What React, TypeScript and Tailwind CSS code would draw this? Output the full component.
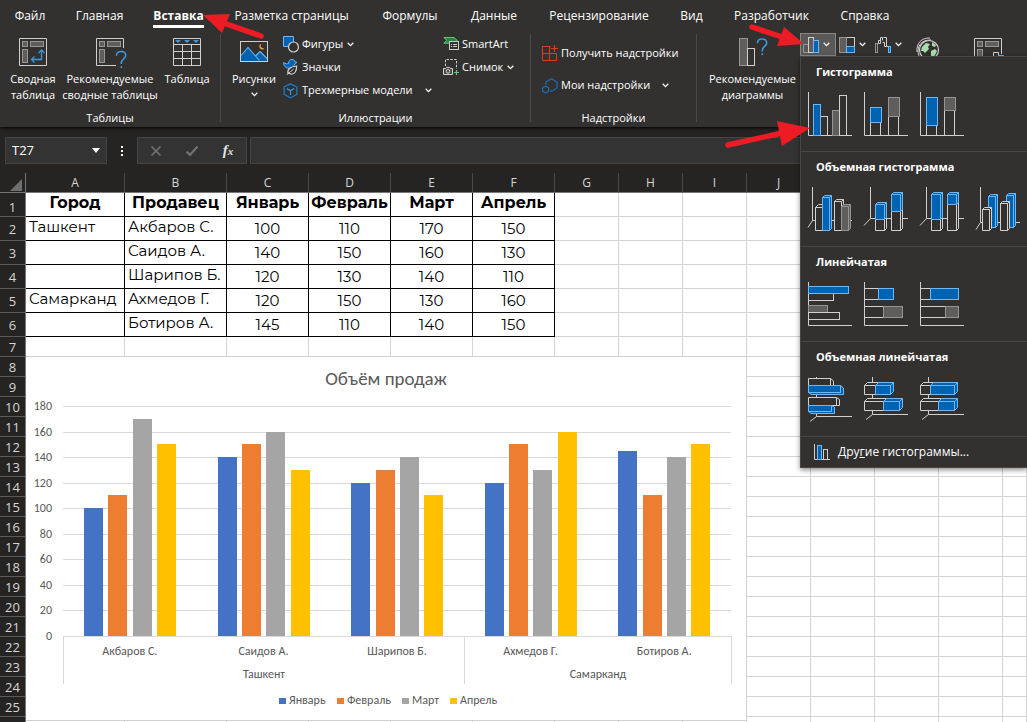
import type { ReactNode } from "react";

const BLUE = "#0063b1";
const BLUE_EDGE = "#6cb8f6";
const SKY = "#3a96dd";
const LIGHT = "#d2d0ce";
const GRAY = "#605e5c";
const GRAY_EDGE = "#979593";
const GREEN = "#5fc77a";
const PANEL = "#323130";

type Tone = "blue" | "gray" | "white";
const fills: Record<Tone, string> = { blue: BLUE, gray: GRAY, white: PANEL };
const edges: Record<Tone, string> = { blue: BLUE_EDGE, gray: GRAY_EDGE, white: LIGHT };

function Icon({ w, h, children }: { w: number; h: number; children: ReactNode }) {
  return (
    <svg width={w} height={h} viewBox={`0 0 ${w} ${h}`} fill="none" aria-hidden="true" className="shrink-0 overflow-visible">
      {children}
    </svg>
  );
}

function Bar({ x, y, w, h, t }: { x: number; y: number; w: number; h: number; t: Tone }) {
  return <rect x={x} y={y} width={w} height={h} fill={fills[t]} stroke={edges[t]} />;
}

function Box({ x, y, w, h, t, d = 3 }: { x: number; y: number; w: number; h: number; t: Tone; d?: number }) {
  return (
    <g fill={fills[t]} stroke={edges[t]} strokeLinejoin="round">
      <path d={`M${x + w} ${y}l${d} ${-d}v${h}l${-d} ${d}z`} />
      <path d={`M${x} ${y}l${d} ${-d}h${w}l${-d} ${d}z`} />
      <rect x={x} y={y} width={w} height={h} />
    </g>
  );
}

function Chevron() {
  return (
    <svg width="7" height="5" viewBox="0 0 7 5" fill="none" stroke="#fff" strokeWidth="1.3" aria-hidden="true" className="shrink-0">
      <path d="M0.7 0.8L3.5 3.6L6.3 0.8" />
    </svg>
  );
}

const questionMark = "M0 4.2C0 1.6 1.8 0 4.6 0S9.2 1.7 9.2 4.1C9.2 7.2 4.8 7.6 4.8 11.4V12.6";

function PivotIcon({ suggested = false }: { suggested?: boolean }) {
  return (
    <Icon w={28} h={28}>
      <path d={suggested ? "M20 27.5H0.5V0.5H27.5V10" : "M0.5 0.5H27.5V27.5H0.5Z"} stroke={LIGHT} />
      <g fill={GRAY} stroke={GRAY_EDGE}>
        <rect x="3.5" y="3.5" width="5" height="5" />
        <rect x="11.5" y="3.5" width="13" height="5" />
        <rect x="3.5" y="11.5" width="5" height="13" />
      </g>
      {suggested ? (
        <g stroke={SKY} strokeWidth="1.6">
          <path d={questionMark} transform="translate(20.5 13.5)" />
          <path d="M25.3 28.2V30" />
        </g>
      ) : (
        <path d="M22.5 12V21.5H12.5M19.5 15L22.5 12L25.5 15M15.5 18.5L12.5 21.5L15.5 24.5" stroke={SKY} strokeWidth="1.3" />
      )}
    </Icon>
  );
}

function PivotChartIcon() {
  return (
    <Icon w={30} h={28}>
      <path d="M27.5 16V0.5H0.5V27.5H19" stroke={LIGHT} />
      <g fill={GRAY} stroke={GRAY_EDGE}>
        <rect x="3.5" y="3.5" width="5" height="5" />
        <rect x="11.5" y="3.5" width="13" height="5" />
        <rect x="3.5" y="11.5" width="5" height="13" />
      </g>
      <path d="M19.5 27.5V14.5H24.5V27.5" stroke={LIGHT} />
      <path d="M24.5 17.5H29.5V27.5H24.5Z" fill={BLUE} stroke={BLUE_EDGE} />
    </Icon>
  );
}

function TableIcon() {
  return (
    <Icon w={28} h={28}>
      <path d="M0.5 0.5H27.5V27.5H0.5Z M0.5 6.5H27.5M0.5 13.5H27.5M0.5 20.5H27.5M9.5 6.5V27.5M18.5 6.5V27.5" stroke={LIGHT} />
      <path d="M2 2H8L5 5ZM11 2H17L14 5ZM20 2H26L23 5Z" fill={SKY} />
    </Icon>
  );
}

function PictureIcon() {
  return (
    <Icon w={28} h={28}>
      <rect x="0.5" y="3.5" width="27" height="20" stroke={LIGHT} />
      <path d="M1 18L8 9.5L19.5 23H1Z" fill={BLUE} />
      <path d="M15.5 18L20 13.5L27 20.5V23H19.5Z" fill={BLUE} />
      <path d="M1 17.5L8 9.5L19.5 22.5M15.5 18L20 13.5L27 20.5" stroke={BLUE_EDGE} strokeWidth="1.1" />
      <path d="M21 6C19.6 7.6 20.4 10.6 24 10.6C22 12 19.4 10.6 19.6 8.4C19.7 7.2 20.2 6.4 21 6Z" fill="#f2a33c" stroke="#f2a33c" strokeWidth="0.5" />
    </Icon>
  );
}

function ShapesIcon() {
  return (
    <Icon w={16} h={16}>
      <path d="M0.5 -0.5H10.5V9.5H0.5Z" fill={BLUE} stroke={BLUE_EDGE} />
      <circle cx="10.5" cy="10" r="5" fill={PANEL} stroke={LIGHT} strokeWidth="1.2" />
    </Icon>
  );
}

function PictogramIcon() {
  return (
    <Icon w={16} h={16}>
      <path d="M0.6 2.5C2.4 4 4.4 4 5.8 3.4C5.4 1 7 -0.6 8.8 -0.6C10.6 -0.6 11.6 0.4 11.8 1.8L14 2.4L11.8 3.8C11.4 6.6 9.4 8.2 6 8.2C2.6 8.2 0.4 5.8 0.6 2.5Z" fill={BLUE} stroke={BLUE_EDGE} />
      <path d="M5 13.5C4 9.5 7 6.6 13.6 6C13.8 11.6 11.4 14.4 8 14C6.6 13.8 5.6 13.2 5 12.5Z" fill={PANEL} stroke={LIGHT} strokeWidth="1.2" />
      <path d="M4 14.8C6 12 8.6 11.4 10.6 9" stroke={LIGHT} />
    </Icon>
  );
}

function CubeIcon() {
  return (
    <Icon w={16} h={16}>
      <path d="M7.5 0.8L13.9 4V11.4L7.5 14.8L1.1 11.4V4Z" stroke="#1a78c8" strokeWidth="1.3" />
      <path d="M3.8 5.6L7.5 7.6L11.2 5.6M7.5 7.6V12" stroke={SKY} strokeWidth="1.2" />
    </Icon>
  );
}

function SmartArtIcon() {
  return (
    <Icon w={16} h={16}>
      <path d="M0.8 0.5H11L14.4 3.6L11.5 6.2H0.8L4 3.4Z" fill="#27863f" stroke={GREEN} />
      <rect x="6.5" y="4.5" width="9" height="8" fill={PANEL} stroke={LIGHT} />
      <path d="M8 7.5H9M10 7.5H14M8 9.5H9M10 9.5H14" stroke={LIGHT} />
    </Icon>
  );
}

function SnapshotIcon() {
  return (
    <Icon w={16} h={16}>
      <path d="M2.5 6V-0.5H13.5V9" stroke={LIGHT} strokeDasharray="2.4 1.4" />
      <path d="M0.5 8.5H2.6L3.4 7.4H6.6L7.4 8.5H9.5V14.5H0.5Z" fill="#4a4846" stroke={LIGHT} />
      <circle cx="5" cy="11.3" r="1.8" stroke={LIGHT} />
      <path d="M13.5 10V15M11 12.5H16" stroke={GREEN} strokeWidth="1.2" />
    </Icon>
  );
}

function GetAddInsIcon() {
  return (
    <Icon w={16} h={16}>
      <path d="M8.5 0.5H0.5V14.5H14.5V7.5M0.5 7.5H14.5M7.5 0.5V14.5M12.5 -1V6M9 2.5H16" stroke="#e03c0c" />
    </Icon>
  );
}

function MyAddInsIcon() {
  return (
    <Icon w={16} h={16}>
      <path d="M4 7V4L9.5 0.8L15 4V10L9.5 13.4L8 12.6" stroke="#1a6fb8" strokeWidth="1.2" />
      <path d="M3.6 8.2L6.6 9.8V13.2L3.6 15L0.6 13.2V9.8Z" stroke="#1a6fb8" strokeWidth="1.2" />
    </Icon>
  );
}

function RecommendedChartsIcon() {
  return (
    <Icon w={28} h={28}>
      <rect x="0.5" y="0.5" width="8" height="27" fill={GRAY} stroke={GRAY_EDGE} />
      <rect x="8.5" y="10.5" width="7" height="17" stroke={LIGHT} />
      <path d={questionMark} transform="translate(18.5 1)" stroke={SKY} strokeWidth="1.6" />
      <path d="M23.3 15.2V17.2" stroke={SKY} strokeWidth="1.6" />
    </Icon>
  );
}

function ColumnMiniIcon() {
  return (
    <Icon w={16} h={16}>
      <path d="M5.5 15.5H0.5V7.5H5.5" stroke={GRAY_EDGE} />
      <rect x="5.5" y="0.5" width="5" height="15" fill={GRAY} stroke={LIGHT} />
      <rect x="10.5" y="3.5" width="5" height="12" fill={BLUE} stroke={BLUE_EDGE} />
    </Icon>
  );
}

function TreemapMiniIcon() {
  return (
    <Icon w={16} h={16}>
      <rect x="7.5" y="0.5" width="8" height="9" stroke={LIGHT} />
      <rect x="0.5" y="0.5" width="7" height="15" fill={GRAY} stroke={GRAY_EDGE} />
      <rect x="7.5" y="9.5" width="8" height="6" fill={BLUE} stroke={BLUE_EDGE} />
    </Icon>
  );
}

function WaterfallMiniIcon() {
  return (
    <Icon w={16} h={16}>
      <rect x="0.5" y="6.5" width="2" height="9" stroke={GRAY_EDGE} />
      <path d="M3.5 6.5V3.5H5.5V0.5H7.5V3.5M3.5 6.5H5.5V3.5M8.5 0.5H11.5V9.5H9.5V5.5H7.5" stroke={LIGHT} />
      <rect x="13.5" y="9.5" width="2" height="6" fill={BLUE} stroke={BLUE_EDGE} />
      <path d="M11.5 9.5H13.5" stroke={LIGHT} />
    </Icon>
  );
}

function GlobeIcon() {
  return (
    <Icon w={24} h={24}>
      <circle cx="13" cy="13" r="9.5" fill={PANEL} stroke={LIGHT} strokeWidth="1.2" />
      <path d="M6 10L10 6L14 7L12 10L13 12L9 16L7 14L5 14Z" fill="#a6dcae" />
      <path d="M16 5L20 8L19 10L16 9ZM15 14L19 12L21 14L18 20L15 19Z" fill="#a6dcae" />
      <path d="M1 15C0 6 6 0.5 14 1M3 19C-0.5 9 6 2.5 15 3" stroke={LIGHT} />
    </Icon>
  );
}

const tabs = ["Файл", "Главная", "Вставка", "Разметка страницы", "Формулы", "Данные", "Рецензирование", "Вид", "Разработчик", "Справка"];

function BigButton({ icon, lines, chevron = false }: { icon: ReactNode; lines: string[]; chevron?: boolean }) {
  return (
    <button type="button" className="flex min-w-0 flex-col items-center pt-[7px] text-white">
      {icon}
      <span className="mt-[5px] flex flex-col items-center whitespace-nowrap leading-4">
        {lines.map((line) => (
          <span key={line}>{line}</span>
        ))}
      </span>
      {chevron && (
        <span className="mt-[5px]">
          <Chevron />
        </span>
      )}
    </button>
  );
}

function SmallButton({ icon, label, arrow = "none" }: { icon: ReactNode; label: string; arrow?: "none" | "near" | "far" }) {
  return (
    <button type="button" className="flex h-[23px] items-center whitespace-nowrap text-white">
      {icon}
      <span className="ml-[3px]">{label}</span>
      {arrow !== "none" && (
        <span className={arrow === "near" ? "ml-1" : "ml-3"}>
          <Chevron />
        </span>
      )}
    </button>
  );
}

function Group({ title, className, children }: { title: string; className: string; children: ReactNode }) {
  return (
    <section aria-label={title} className={`flex shrink-0 flex-col ${className}`}>
      <div className="h-[79px]">{children}</div>
      <h2 className="text-center leading-4">{title}</h2>
    </section>
  );
}

function Divider() {
  return <div className="mt-[3px] h-[88px] w-px shrink-0 bg-[#4b4947]" />;
}

function Ribbon() {
  return (
    <header className="h-[127px] overflow-hidden bg-[#323130] text-white shadow-[0_1px_3px_#000]">
      <nav className="grid h-[31px] grid-cols-[60px_79px_79px_147px_90px_78px_132px_53px_107px_80px] text-xs">
        {tabs.map((tab) => (
          <button key={tab} type="button" className="flex items-start justify-center whitespace-nowrap pt-[7px]">
            <span className={tab === "Вставка" ? "border-b-3 border-white font-bold leading-[18px]" : "leading-[18px]"}>{tab}</span>
          </button>
        ))}
      </nav>
      <div className="flex h-24 text-[11px]">
        <Group title="Таблицы" className="w-[220px]">
          <div className="grid grid-cols-[58px_96px_58px] pl-1">
            <BigButton icon={<PivotIcon />} lines={["Сводная", "таблица"]} />
            <BigButton icon={<PivotIcon suggested />} lines={["Рекомендуемые", "сводные таблицы"]} />
            <BigButton icon={<TableIcon />} lines={["Таблица"]} />
          </div>
        </Group>
        <Divider />
        <Group title="Иллюстрации" className="w-[309px]">
          <div className="grid grid-cols-[58px_160px_80px] pl-1">
            <BigButton icon={<PictureIcon />} lines={["Рисунки"]} chevron />
            <div className="flex flex-col items-start pt-[2px]">
              <SmallButton icon={<ShapesIcon />} label="Фигуры" arrow="near" />
              <SmallButton icon={<PictogramIcon />} label="Значки" />
              <SmallButton icon={<CubeIcon />} label="Трехмерные модели" arrow="far" />
            </div>
            <div className="flex flex-col items-start pt-[2px]">
              <SmallButton icon={<SmartArtIcon />} label="SmartArt" />
              <SmallButton icon={<SnapshotIcon />} label="Снимок" arrow="near" />
            </div>
          </div>
        </Group>
        <Divider />
        <Group title="Надстройки" className="w-[165px]">
          <div className="flex flex-col items-start gap-[9px] pl-[11px] pt-[11px]">
            <SmallButton icon={<GetAddInsIcon />} label="Получить надстройки" />
            <SmallButton icon={<MyAddInsIcon />} label="Мои надстройки" arrow="far" />
          </div>
        </Group>
        <Divider />
        <div className="flex min-w-0 items-start">
          <div className="grid w-[103px] grid-cols-[96px] justify-center pl-2">
            <BigButton icon={<RecommendedChartsIcon />} lines={["Рекомендуемые", "диаграммы"]} />
          </div>
          <button type="button" aria-label="Гистограмма" aria-expanded="true" className="mt-[2px] flex h-[23px] w-9 items-center gap-1 border border-[#8a8886] bg-[#5b5957] pl-[2px]">
            <ColumnMiniIcon />
            <Chevron />
          </button>
          <button type="button" aria-label="Иерархия" className="mt-[2px] flex h-[23px] w-9 items-center gap-1 pl-[3px]">
            <TreemapMiniIcon />
            <Chevron />
          </button>
          <button type="button" aria-label="Каскадная" className="mt-[2px] flex h-[23px] w-9 items-center gap-1 pl-[3px]">
            <WaterfallMiniIcon />
            <Chevron />
          </button>
          <button type="button" aria-label="Карты" className="ml-2 mt-[6px]">
            <GlobeIcon />
          </button>
          <button type="button" aria-label="Сводная диаграмма" className="ml-[34px] mt-[7px]">
            <PivotChartIcon />
          </button>
        </div>
      </div>
    </header>
  );
}

function FormulaBar() {
  return (
    <div className="flex h-[46px] items-start gap-[3px] bg-[#252423] pl-[5px] pt-[10px] text-[13px] text-white">
      <div className="flex h-[27px] w-[102px] items-center justify-between border border-[#444] bg-[#333] pl-[6px] pr-[6px]">
        <input aria-label="Имя" defaultValue="T27" className="w-16 bg-transparent outline-none" />
        <svg width="8" height="5" viewBox="0 0 8 5" aria-hidden="true">
          <path d="M0 0H8L4 5Z" fill="#fff" />
        </svg>
      </div>
      <div className="flex h-[27px] w-6 flex-col items-center justify-center gap-[2px]">
        <span className="size-[2px] bg-white" />
        <span className="size-[2px] bg-white" />
        <span className="size-[2px] bg-white" />
      </div>
      <div className="grid h-[27px] w-[110px] grid-cols-3 items-center justify-items-center border border-[#444] bg-[#333]">
        <button type="button" aria-label="Отмена">
          <Icon w={12} h={12}>
            <path d="M1.5 1.5L10.5 10.5M10.5 1.5L1.5 10.5" stroke="#737373" strokeWidth="1.6" />
          </Icon>
        </button>
        <button type="button" aria-label="Ввод">
          <Icon w={14} h={12}>
            <path d="M1.5 6.5L5 10L12.5 1.5" stroke="#737373" strokeWidth="2.2" />
          </Icon>
        </button>
        <button type="button" className="font-['Liberation_Serif',serif] text-[15px] font-bold italic leading-4 text-[#e6e6e6]">
          f<span className="text-[11px]">x</span>
        </button>
      </div>
      <input aria-label="Строка формул" className="h-[27px] min-w-0 flex-1 border border-[#444] bg-[#333] px-2 outline-none" />
    </div>
  );
}

const columns = ["A", "B", "C", "D", "E", "F", "G", "H", "I", "J", "K", "L", "M", "N"];
const data = [
  ["Город", "Продавец", "Январь", "Февраль", "Март", "Апрель"],
  ["Ташкент", "Акбаров С.", "100", "110", "170", "150"],
  ["", "Саидов А.", "140", "150", "160", "130"],
  ["", "Шарипов Б.", "120", "130", "140", "110"],
  ["Самарканд", "Ахмедов Г.", "120", "150", "130", "160"],
  ["", "Ботиров А.", "145", "110", "140", "150"],
];
const rowNumbers = Array.from({ length: 25 }, (_, i) => i + 1);

function cellClass(row: number, col: number) {
  if (row > 6 || col > 5) return "border-b border-r border-[#d4d4d4] p-0";
  const base = "overflow-hidden whitespace-nowrap border-b border-r border-black p-0";
  if (row === 1) return `${base} pb-1 text-center text-base font-bold leading-[19px]`;
  if (col < 2) return `${base} pb-1 pl-[3px] text-left leading-[19px]`;
  return `${base} text-center leading-[19px]`;
}

function Sheet() {
  return (
    <table className="w-full table-fixed border-separate border-spacing-0 bg-white font-['Montserrat','Inter',sans-serif] text-[15px] text-black">
      <colgroup>
        <col className="w-[26px]" />
        <col className="w-[99px]" />
        <col className="w-[102px]" />
        {columns.slice(2, 6).map((c) => (
          <col key={c} className="w-[82px]" />
        ))}
        {columns.slice(6, 13).map((c) => (
          <col key={c} className="w-16" />
        ))}
        <col />
      </colgroup>
      <thead className="bg-[#252423] font-['Open_Sans',sans-serif] text-xs text-[#d6d6d6]">
        <tr className="h-5">
          <th aria-label="Выделить все" className="border-b border-r border-[#777] p-0">
            <svg width="12" height="12" viewBox="0 0 12 12" aria-hidden="true" className="ml-auto mr-[3px] mt-1">
              <path d="M12 0V12H0Z" fill="#6e6e6e" />
            </svg>
          </th>
          {columns.map((c) => (
            <th key={c} scope="col" className="h-5 border-b border-r border-b-[#777] border-r-[#4a4a4a] p-0 font-normal leading-4">
              {c}
            </th>
          ))}
        </tr>
      </thead>
      <tbody>
        {rowNumbers.map((r) => (
          <tr key={r} className={r < 7 ? "h-6" : "h-5"}>
            <th scope="row" className={`border-b border-r border-b-[#5a5a5a] border-r-[#777] bg-[#252423] p-0 font-['Open_Sans',sans-serif] text-[13px] font-normal leading-[18px] text-[#d6d6d6] ${r === 1 ? "pt-1" : ""}`}>
              {r}
            </th>
            {columns.map((c, i) => (
              <td key={c} className={cellClass(r, i)}>
                {data[r - 1]?.[i] ?? ""}
              </td>
            ))}
          </tr>
        ))}
        <tr className="h-5">
          <th className="border-r border-[#777] bg-[#252423] p-0" />
          {columns.map((c) => (
            <td key={c} className="border-r border-[#d4d4d4] p-0" />
          ))}
        </tr>
      </tbody>
    </table>
  );
}

const series = [
  { name: "Январь", color: "#4472c4", x: 253, values: [100, 140, 120, 120, 145] },
  { name: "Февраль", color: "#ed7d31", x: 311, values: [110, 150, 130, 150, 110] },
  { name: "Март", color: "#a5a5a5", x: 376, values: [170, 160, 140, 130, 140] },
  { name: "Апрель", color: "#ffc000", x: 424, values: [150, 130, 110, 160, 150] },
];
const sellers = ["Акбаров С.", "Саидов А.", "Шарипов Б.", "Ахмедов Г.", "Ботиров А."];
const baseline = 280;
const plotLeft = 37;
const plotRight = 705;
const slot = (plotRight - plotLeft) / 5;
const valueY = (v: number) => Math.round(baseline - (v * 230) / 180);

function Chart() {
  return (
    <svg viewBox="0 0 721 365" role="img" aria-label="Объём продаж" className="absolute left-[26px] top-[183px] h-[365px] w-[721px] font-['Carlito','Lato','Open_Sans',sans-serif]" fill="#595959" fontSize="12">
      <rect x="-0.5" y="0.5" width="721" height="364" fill="#fff" stroke="#d0d0d0" />
      <text x="360" y="29" textAnchor="middle" fontSize="19">
        Объём продаж
      </text>
      {[0, 20, 40, 60, 80, 100, 120, 140, 160, 180].map((v) => (
        <g key={v}>
          <path d={`M${plotLeft} ${valueY(v) + 0.5}H${plotRight}`} stroke="#d9d9d9" />
          <text x="26" y={valueY(v) + 4} textAnchor="end">
            {v}
          </text>
        </g>
      ))}
      {series.map((s, k) =>
        s.values.map((v, i) => (
          <rect key={`${s.name}-${i}`} x={Math.round(plotLeft + slot * i + 21 + k * 24.3)} y={valueY(v)} width="19" height={baseline - valueY(v)} fill={s.color} />
        )),
      )}
      <path d="M37.5 280V328M438.5 280V328M705.5 280V328" stroke="#d9d9d9" />
      {sellers.map((name, i) => (
        <text key={name} x={plotLeft + slot * (i + 0.5)} y="299" textAnchor="middle">
          {name}
        </text>
      ))}
      <text x="238" y="322" textAnchor="middle">
        Ташкент
      </text>
      <text x="572" y="322" textAnchor="middle">
        Самарканд
      </text>
      {series.map((s) => (
        <g key={s.name}>
          <rect x={s.x} y="342" width="7" height="6" fill={s.color} />
          <text x={s.x + 10} y="348">
            {s.name}
          </text>
        </g>
      ))}
    </svg>
  );
}

const flatAxis = <path d="M0.5 0V43.5H44" stroke={LIGHT} />;
const deepAxis = (x: number, y: number) => <path d={`M${x} 0V${y}L0 ${y + 7}M${x} ${y}H44`} stroke={LIGHT} />;
const deepBarAxis = (y: number) => <path d={`M8.5 0V${y}L2 ${y + 5}M8.5 ${y}H44`} stroke={LIGHT} />;

const menuSections: { title: string; icons: ReactNode[] }[] = [
  {
    title: "Гистограмма",
    icons: [
      <>
        {flatAxis}
        <Bar x={12.5} y={24.5} w={7} h={19} t="white" />
        <Bar x={5.5} y={12.5} w={7} h={31} t="blue" />
        <Bar x={24.5} y={18.5} w={7} h={25} t="gray" />
        <Bar x={31.5} y={3.5} w={7} h={40} t="white" />
      </>,
      <>
        {flatAxis}
        <Bar x={6.5} y={30.5} w={10} h={13} t="white" />
        <Bar x={6.5} y={15.5} w={11} h={15} t="blue" />
        <Bar x={24.5} y={24.5} w={10} h={19} t="white" />
        <Bar x={24.5} y={5.5} w={11} h={19} t="gray" />
      </>,
      <>
        {flatAxis}
        <Bar x={6.5} y={33.5} w={10} h={10} t="white" />
        <Bar x={6.5} y={5.5} w={11} h={28} t="blue" />
        <Bar x={24.5} y={18.5} w={10} h={25} t="white" />
        <Bar x={24.5} y={5.5} w={11} h={13} t="gray" />
      </>,
    ],
  },
  {
    title: "Объемная гистограмма",
    icons: [
      <>
        {deepAxis(4.5, 33.5)}
        <Box x={7.5} y={20.5} w={7} h={23} t="white" />
        <Box x={14.5} y={10.5} w={7} h={33} t="blue" d={2} />
        <Box x={26.5} y={14.5} w={7} h={29} t="white" d={2} />
        <Box x={33.5} y={19.5} w={7} h={24} t="gray" d={2} />
      </>,
      <>
        {deepAxis(6.5, 31.5)}
        <Box x={11.5} y={32.5} w={9} h={11} t="white" d={2} />
        <Box x={11.5} y={17.5} w={9} h={15} t="blue" d={2} />
        <Box x={27.5} y={24.5} w={9} h={19} t="white" d={2} />
        <Box x={27.5} y={7.5} w={9} h={17} t="blue" d={2} />
      </>,
      <>
        {deepAxis(6.5, 31.5)}
        <Box x={11.5} y={32.5} w={9} h={11} t="white" d={2} />
        <Box x={11.5} y={7.5} w={9} h={25} t="blue" d={2} />
        <Box x={27.5} y={17.5} w={9} h={26} t="white" d={2} />
        <Box x={27.5} y={7.5} w={9} h={10} t="blue" d={2} />
      </>,
      <>
        {deepAxis(4.5, 35.5)}
        <Box x={12.5} y={9.5} w={7} h={31} t="blue" d={2} />
        <Box x={6.5} y={22.5} w={7} h={21} t="white" d={2} />
        <Box x={30.5} y={8.5} w={7} h={32} t="blue" d={2} />
        <Box x={24.5} y={16.5} w={7} h={27} t="white" d={2} />
      </>,
    ],
  },
  {
    title: "Линейчатая",
    icons: [
      <>
        {flatAxis}
        <Bar x={0.5} y={11.5} w={25} h={7} t="white" />
        <Bar x={0.5} y={4.5} w={40} h={7} t="blue" />
        <Bar x={0.5} y={23.5} w={19} h={7} t="gray" />
        <Bar x={0.5} y={30.5} w={31} h={7} t="white" />
      </>,
      <>
        {flatAxis}
        <Bar x={0.5} y={6.5} w={14} h={11} t="white" />
        <Bar x={14.5} y={6.5} w={15} h={11} t="blue" />
        <Bar x={0.5} y={24.5} w={19} h={11} t="white" />
        <Bar x={19.5} y={24.5} w={19} h={11} t="gray" />
      </>,
      <>
        {flatAxis}
        <Bar x={0.5} y={6.5} w={10} h={11} t="white" />
        <Bar x={10.5} y={6.5} w={28} h={11} t="blue" />
        <Bar x={0.5} y={24.5} w={25} h={11} t="white" />
        <Bar x={25.5} y={24.5} w={13} h={11} t="gray" />
      </>,
    ],
  },
  {
    title: "Объемная линейчатая",
    icons: [
      <>
        {deepBarAxis(39.5)}
        <g stroke={LIGHT} fill={PANEL}>
          <path d="M0.5 1.5H22.5L25.5 4V8.5H0.5ZM22.5 1.5V8.5M0.5 20.5H28.5L31.5 22.5V28.5H0.5ZM28.5 20.5V28.5" />
        </g>
        <g stroke={BLUE_EDGE} fill={BLUE}>
          <path d="M0.5 15.5L3 17.5H35.5V11L32.5 8.5V15.5ZM0.5 34.5L3 36.5H26.5V30L23.5 28.5V34.5Z" />
          <path d="M0.5 8.5H32.5V15.5H0.5ZM0.5 28.5H23.5V34.5H0.5Z" />
        </g>
      </>,
      <>
        {deepBarAxis(37.5)}
        <Box x={0.5} y={8.5} w={11} h={9} t="white" />
        <Box x={11.5} y={8.5} w={15} h={9} t="blue" />
        <Box x={0.5} y={24.5} w={19} h={9} t="white" />
        <Box x={19.5} y={24.5} w={16} h={9} t="blue" />
      </>,
      <>
        {deepBarAxis(37.5)}
        <Box x={0.5} y={8.5} w={10} h={9} t="white" />
        <Box x={10.5} y={8.5} w={24} h={9} t="blue" />
        <Box x={0.5} y={24.5} w={18} h={9} t="white" />
        <Box x={18.5} y={24.5} w={16} h={9} t="blue" />
      </>,
    ],
  },
];

function ChartMenu() {
  return (
    <aside className="absolute right-0 top-14 w-[227px] border border-r-0 border-[#484644] bg-[#323130] text-white shadow-[0_2px_5px_rgba(0,0,0,0.45)]">
      {menuSections.map((section) => (
        <section key={section.title} className="h-[95px] border-b border-[#484644] pl-[7px] pt-[7px]">
          <h3 className="pl-2 text-[11px] font-bold leading-4">{section.title}</h3>
          <div className="mt-3 flex gap-3">
            {section.icons.map((drawing, i) => (
              <button key={i} type="button" aria-label={`${section.title} ${i + 1}`}>
                <Icon w={44} h={44}>
                  {drawing}
                </Icon>
              </button>
            ))}
          </div>
        </section>
      ))}
      <button type="button" className="flex h-[30px] w-full items-center gap-2 pl-[13px] text-xs">
        <Icon w={16} h={16}>
          <path d="M0.5 0V15.5H16" stroke={LIGHT} />
          <Bar x={3.5} y={1.5} w={4} h={14} t="blue" />
          <Bar x={9.5} y={5.5} w={4} h={10} t="white" />
        </Icon>
        <span>
          Дру<u>г</u>ие гистограммы...
        </span>
      </button>
    </aside>
  );
}

function Arrows() {
  return (
    <svg width="1027" height="200" viewBox="0 0 1027 200" aria-hidden="true" className="pointer-events-none absolute left-0 top-0">
      <g stroke="#ed1c24" strokeWidth="5.5" strokeLinecap="round">
        <path d="M225 23.5L261 36M752 27L782 37M728 145L782 133" />
      </g>
      <path d="M203 15L230 14L222 33ZM804 44L784 27L777 46ZM810 128L777 121L782 146Z" fill="#ed1c24" />
    </svg>
  );
}

export default function App() {
  return (
    <div className="relative h-screen overflow-hidden bg-[#252423] font-['Open_Sans','Noto_Sans',sans-serif]">
      <div className="relative z-10">
        <Ribbon />
      </div>
      <FormulaBar />
      <main className="relative">
        <Sheet />
        <Chart />
      </main>
      <div className="absolute inset-x-0 top-0 z-20">
        <ChartMenu />
        <Arrows />
      </div>
    </div>
  );
}
